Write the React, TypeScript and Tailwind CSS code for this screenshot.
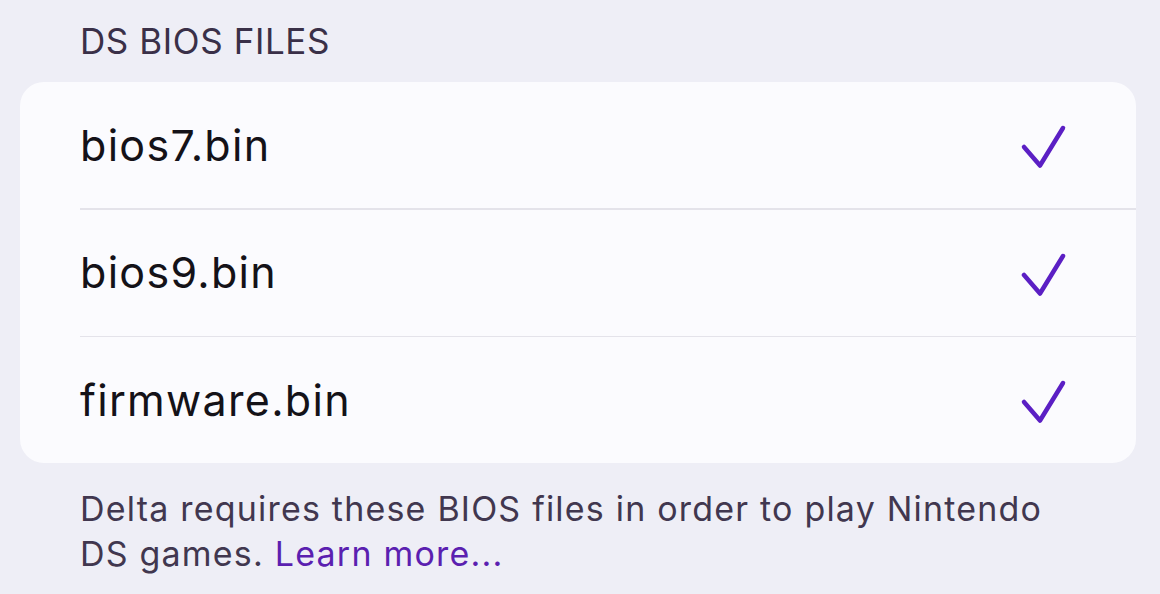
import React from "react";

function Check() {
  return (
    <svg width="48" height="48" viewBox="0 0 48 48" fill="none">
      <path d="M5 26 L21 44.5 L44 7" stroke="#5b1fc4" strokeWidth="4.5" strokeLinecap="round" strokeLinejoin="round" />
    </svg>
  );
}

const files = ["bios7.bin", "bios9.bin", "firmware.bin"];

export default function App() {
  return (
    <div className="w-[1160px] h-[594px] overflow-hidden bg-[#eeeef6] flex flex-col" style={{ fontFamily: "Inter, 'Noto Sans', sans-serif" }}>
      <div className="pl-[80px] pt-[20px] h-[82px] text-[35px] leading-[42px] text-[#3a3048] tracking-[0.6px]">DS BIOS FILES</div>
      <div className="mx-[20px] w-[1116px] bg-[#fbfbfe] rounded-[24px] flex flex-col">
        {files.map((f, i) => (
          <div key={f} className="pl-[60px] flex flex-col">
            <div className="h-[126px] flex items-center justify-between pr-[69px]">
              <span className="text-[43px] text-[#141218] tracking-[1.3px]">{f}</span>
              <Check />
            </div>
            {i < files.length - 1 && <div className="h-[1.5px] bg-[#e4e3ea]" />}
          </div>
        ))}
      </div>
      <div className="pl-[80px] pr-[100px] pt-[23px] text-[34px] leading-[45px] text-[#41374f] tracking-[1.2px]">
        Delta requires these BIOS files in order to play Nintendo DS games.{" "}
        <span className="text-[#5b1fb0]">Learn more...</span>
      </div>
    </div>
  );
}
